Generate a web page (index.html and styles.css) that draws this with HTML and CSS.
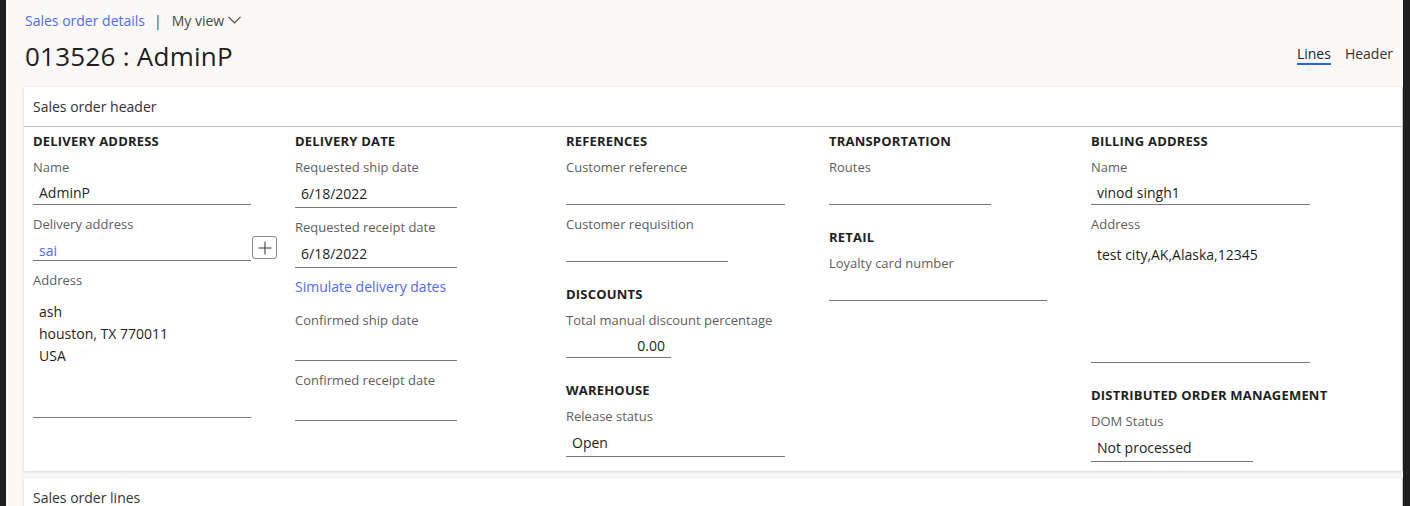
FILE: index.html
```html
<!DOCTYPE html>
<html lang="en">
<head>
<meta charset="utf-8">
<title>Sales order details</title>
<link rel="stylesheet" href="styles.css">
</head>
<body>
<div class="frame">
  <div class="page">
    <div class="topbar">
      <div class="breadcrumb">
        <a class="crumb-link">Sales order details</a>
        <span class="crumb-sep">|</span>
        <span class="crumb-view">My view
          <svg class="chev" width="13" height="8" viewBox="0 0 13 8"><path d="M0.5 0.8 L6.5 6.8 L12.5 0.8" fill="none" stroke="#484644" stroke-width="1.2"/></svg>
        </span>
      </div>
      <div class="title-row">
        <h1 class="title">013526 : AdminP</h1>
        <div class="tabs">
          <span class="tab active">Lines</span>
          <span class="tab">Header</span>
        </div>
      </div>
    </div>

    <section class="card">
      <div class="card-head">Sales order header</div>
      <div class="card-body">
        <div class="col">
          <div class="section">
            <div class="sec-title">DELIVERY ADDRESS</div>
            <div class="field">
              <div class="label">Name</div>
              <div class="input w218">AdminP</div>
            </div>
            <div class="field">
              <div class="label">Delivery address</div>
              <div class="input-row">
                <div class="input w218 short link-val">sai</div>
                <span class="plus-btn"><svg width="14" height="14" viewBox="0 0 14 14"><path d="M7 0.5 V13.5 M0.5 7 H13.5" stroke="#323130" stroke-width="1"/></svg></span>
              </div>
            </div>
            <div class="field">
              <div class="label">Address</div>
              <div class="input w218 multi multi-a">ash<br>houston, TX 770011<br>USA</div>
            </div>
          </div>
        </div>

        <div class="col">
          <div class="section">
            <div class="sec-title">DELIVERY DATE</div>
            <div class="field">
              <div class="label">Requested ship date</div>
              <div class="input w162 tall">6/18/2022</div>
            </div>
            <div class="field">
              <div class="label">Requested receipt date</div>
              <div class="input w162 tall">6/18/2022</div>
            </div>
            <a class="action-link">Simulate delivery dates</a>
            <div class="field">
              <div class="label">Confirmed ship date</div>
              <div class="input w162 tall"></div>
            </div>
            <div class="field">
              <div class="label">Confirmed receipt date</div>
              <div class="input w162 tall"></div>
            </div>
          </div>
        </div>

        <div class="col">
          <div class="section">
            <div class="sec-title">REFERENCES</div>
            <div class="field">
              <div class="label">Customer reference</div>
              <div class="input w219"></div>
            </div>
            <div class="field">
              <div class="label">Customer requisition</div>
              <div class="input w162"></div>
            </div>
          </div>
          <div class="section">
            <div class="sec-title">DISCOUNTS</div>
            <div class="field">
              <div class="label">Total manual discount percentage</div>
              <div class="input w105 num">0.00</div>
            </div>
          </div>
          <div class="section">
            <div class="sec-title">WAREHOUSE</div>
            <div class="field">
              <div class="label">Release status</div>
              <div class="input w219 tall">Open</div>
            </div>
          </div>
        </div>

        <div class="col">
          <div class="section">
            <div class="sec-title">TRANSPORTATION</div>
            <div class="field">
              <div class="label">Routes</div>
              <div class="input w162"></div>
            </div>
          </div>
          <div class="section">
            <div class="sec-title">RETAIL</div>
            <div class="field">
              <div class="label">Loyalty card number</div>
              <div class="input w218"></div>
            </div>
          </div>
        </div>

        <div class="col">
          <div class="section">
            <div class="sec-title">BILLING ADDRESS</div>
            <div class="field">
              <div class="label">Name</div>
              <div class="input w219">vinod singh1</div>
            </div>
            <div class="field">
              <div class="label">Address</div>
              <div class="input w219 multi multi-b">test city,AK,Alaska,12345</div>
            </div>
          </div>
          <div class="section">
            <div class="sec-title">DISTRIBUTED ORDER MANAGEMENT</div>
            <div class="field">
              <div class="label">DOM Status</div>
              <div class="input w162 tall">Not processed</div>
            </div>
          </div>
        </div>
      </div>
    </section>

    <section class="card card-lines">
      <div class="card-head">Sales order lines</div>
    </section>
  </div>
</div>
</body>
</html>
```

FILE: styles.css
```css
* { box-sizing: border-box; }

html, body {
  margin: 0;
  padding: 0;
  height: 100%;
  overflow: hidden;
}

body {
  background: #1f1f1f;
  font-family: "Open Sans", "Noto Sans", sans-serif;
  color: #323130;
}

.frame {
  height: 100%;
  padding: 0 7px 0 6px;
}

.page {
  height: 100%;
  background: #faf9f8;
  padding: 0 0 0 18px;
  overflow: hidden;
}

.topbar {
  padding: 11px 10px 0 1px;
}

.breadcrumb {
  display: flex;
  align-items: center;
  height: 20px;
  font-size: 14px;
  line-height: 20px;
}

.crumb-link {
  color: #4f6bed;
}

.crumb-sep {
  color: #5c2d91;
  margin: 0 10px 0 9px;
  font-size: 14px;
}

.crumb-view {
  color: #484644;
  display: inline-flex;
  align-items: center;
  gap: 4px;
}

.chev { margin-top: -2px; }

.title-row {
  display: flex;
  justify-content: space-between;
  align-items: flex-start;
  margin-top: 9px;
  height: 32px;
}

.title {
  margin: 0;
  font-size: 26px;
  font-weight: 400;
  letter-spacing: 0.25px;
  line-height: 32px;
  color: #201f1e;
}

.tabs {
  display: flex;
  gap: 14px;
  font-size: 14px;
  line-height: 18px;
  padding-top: 5px;
}

.tab {
  color: #323130;
  height: 20px;
}

.tab.active {
  border-bottom: 2px solid #2266e3;
  color: #201f1e;
}

.card {
  background: #fff;
  margin-top: 15px;
  box-shadow: 0 1px 3px rgba(0,0,0,0.13), 0 0 1px rgba(0,0,0,0.1);
  border-right: 1px solid #c8c6c4;
}

.card-head {
  height: 40px;
  line-height: 40px;
  padding-left: 9px;
  font-size: 14px;
  color: #323130;
  border-bottom: 1px solid #c8c6c4;
}

.card-lines {
  margin-top: 7px;
}
.card-lines .card-head { border-bottom: none; }

.card-body {
  display: grid;
  grid-template-columns: 262px 271px 263px 262px 1fr;
  padding: 4px 0 0 9px;
}

.col {
  display: flex;
  flex-direction: column;
}

.section + .section {
  margin-top: 13px;
}

.sec-title {
  font-size: 13px;
  font-weight: 700;
  letter-spacing: 0.2px;
  line-height: 20px;
  color: #201f1e;
  margin-bottom: 6px;
}

.field {
  margin-bottom: 9px;
}

.label {
  font-size: 13px;
  line-height: 20px;
  height: 20px;
  color: #605e5c;
  white-space: nowrap;
}

.input {
  height: 28px;
  border-bottom: 1px solid #7a7876;
  font-size: 14px;
  line-height: 20px;
  padding: 6px 6px 0 6px;
  color: #201f1e;
  white-space: nowrap;
}

.input.tall { height: 31px; padding-top: 7px; }
.input.short { height: 27px; padding-top: 7px; }
.input.num { text-align: right; }

.w218 { width: 218px; }
.w219 { width: 219px; }
.w162 { width: 162px; }
.w105 { width: 105px; }

.link-val { color: #4f6bed; }

.input-row {
  display: flex;
  align-items: flex-end;
}

.plus-btn {
  width: 25px;
  height: 23px;
  margin: 0 0 2px 1px;
  border: 1px solid #8a8886;
  border-radius: 3px;
  display: flex;
  align-items: center;
  justify-content: center;
}

.input.multi {
  white-space: normal;
  line-height: 22px;
}

.multi-a { height: 128px; padding-top: 11px; }
.multi-b { height: 129px; padding-top: 10px; }

.action-link {
  display: block;
  font-size: 14px;
  line-height: 20px;
  color: #4f6bed;
  margin: 0 0 13px 0;
}
```
